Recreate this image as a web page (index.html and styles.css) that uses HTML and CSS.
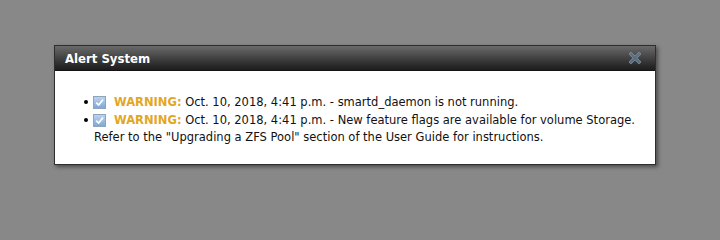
FILE: index.html
```html
<!DOCTYPE html>
<html>
<head>
<meta charset="utf-8">
<link rel="stylesheet" href="styles.css">
</head>
<body>
<div class="dialog">
  <div class="titlebar">
    <span class="title">Alert System</span>
    <svg class="close" width="12" height="12" viewBox="0 0 12 12">
      <path d="M2 2 L10 10 M10 2 L2 10" stroke="#8796a6" stroke-width="3.4" stroke-linecap="square"/>
      <path d="M2 2 L10 10 M10 2 L2 10" stroke="#5d7288" stroke-width="2" stroke-linecap="square"/>
    </svg>
  </div>
  <div class="content">
    <ul class="alerts">
      <li><span class="chk"><svg width="11" height="11" viewBox="0 0 11 11"><path d="M2.2 5.6 L4.6 8 L9 2.6" fill="none" stroke="#fff" stroke-width="1.7"/></svg></span><span class="warn">WARNING:</span> Oct. 10, 2018, 4:41 p.m. - smartd_daemon is not running.</li>
      <li><span class="chk"><svg width="11" height="11" viewBox="0 0 11 11"><path d="M2.2 5.6 L4.6 8 L9 2.6" fill="none" stroke="#fff" stroke-width="1.7"/></svg></span><span class="warn">WARNING:</span> Oct. 10, 2018, 4:41 p.m. - New feature flags are available for volume Storage.</li>
    </ul>
    <p class="note">Refer to the "Upgrading a ZFS Pool" section of the User Guide for instructions.</p>
  </div>
</div>
</body>
</html>
```
FILE: styles.css
```css
html, body {
  margin: 0;
  padding: 0;
}
body {
  background: #888888;
  width: 720px;
  height: 240px;
  padding: 45px 0 0 54px;
  box-sizing: border-box;
  font-family: "DejaVu Sans", Verdana, sans-serif;
}
.dialog {
  width: 600px;
  height: 118px;
  border: 1px solid #2e2e2e;
  background: #ffffff;
  box-shadow: 2px 2px 4px rgba(0,0,0,0.45);
  display: flex;
  flex-direction: column;
}
.titlebar {
  height: 24px;
  background: linear-gradient(#6a6a6a, #4a4a4a 40%, #2a2a2a 80%, #1e1e1e);
  border-bottom: 1px solid #141414;
  display: flex;
  align-items: center;
  justify-content: space-between;
  padding: 0 14px 0 10px;
}
.title {
  color: #ffffff;
  font-family: "DejaVu Sans Condensed", "DejaVu Sans", sans-serif;
  font-stretch: condensed;
  font-weight: bold;
  font-size: 13px;
}
.close {
  display: block;
  opacity: 0.9;
}
.content {
  padding: 22px 10px 0 10px;
  font-size: 11.5px;
  color: #111111;
}
.alerts {
  margin: 0;
  padding-left: 28px;
  list-style: none;
}
.alerts li {
  line-height: 18px;
}
.alerts li::before {
  content: "";
  display: inline-block;
  width: 4px;
  height: 4px;
  border-radius: 50%;
  background: #000000;
  margin: 0 5px 0 -9px;
  vertical-align: 2px;
}
.chk {
  display: inline-flex;
  align-items: center;
  justify-content: center;
  width: 11px;
  height: 11px;
  border: 1px solid #8fa3bd;
  background: linear-gradient(#bcd3ee, #7fa7d6);
  vertical-align: -2px;
  margin-right: 8px;
}
.chk svg { display: block; }
.warn {
  color: #e3a61e;
  font-weight: bold;
}
.note {
  margin: 0;
  padding-left: 29px;
  line-height: 16px;
}
```
